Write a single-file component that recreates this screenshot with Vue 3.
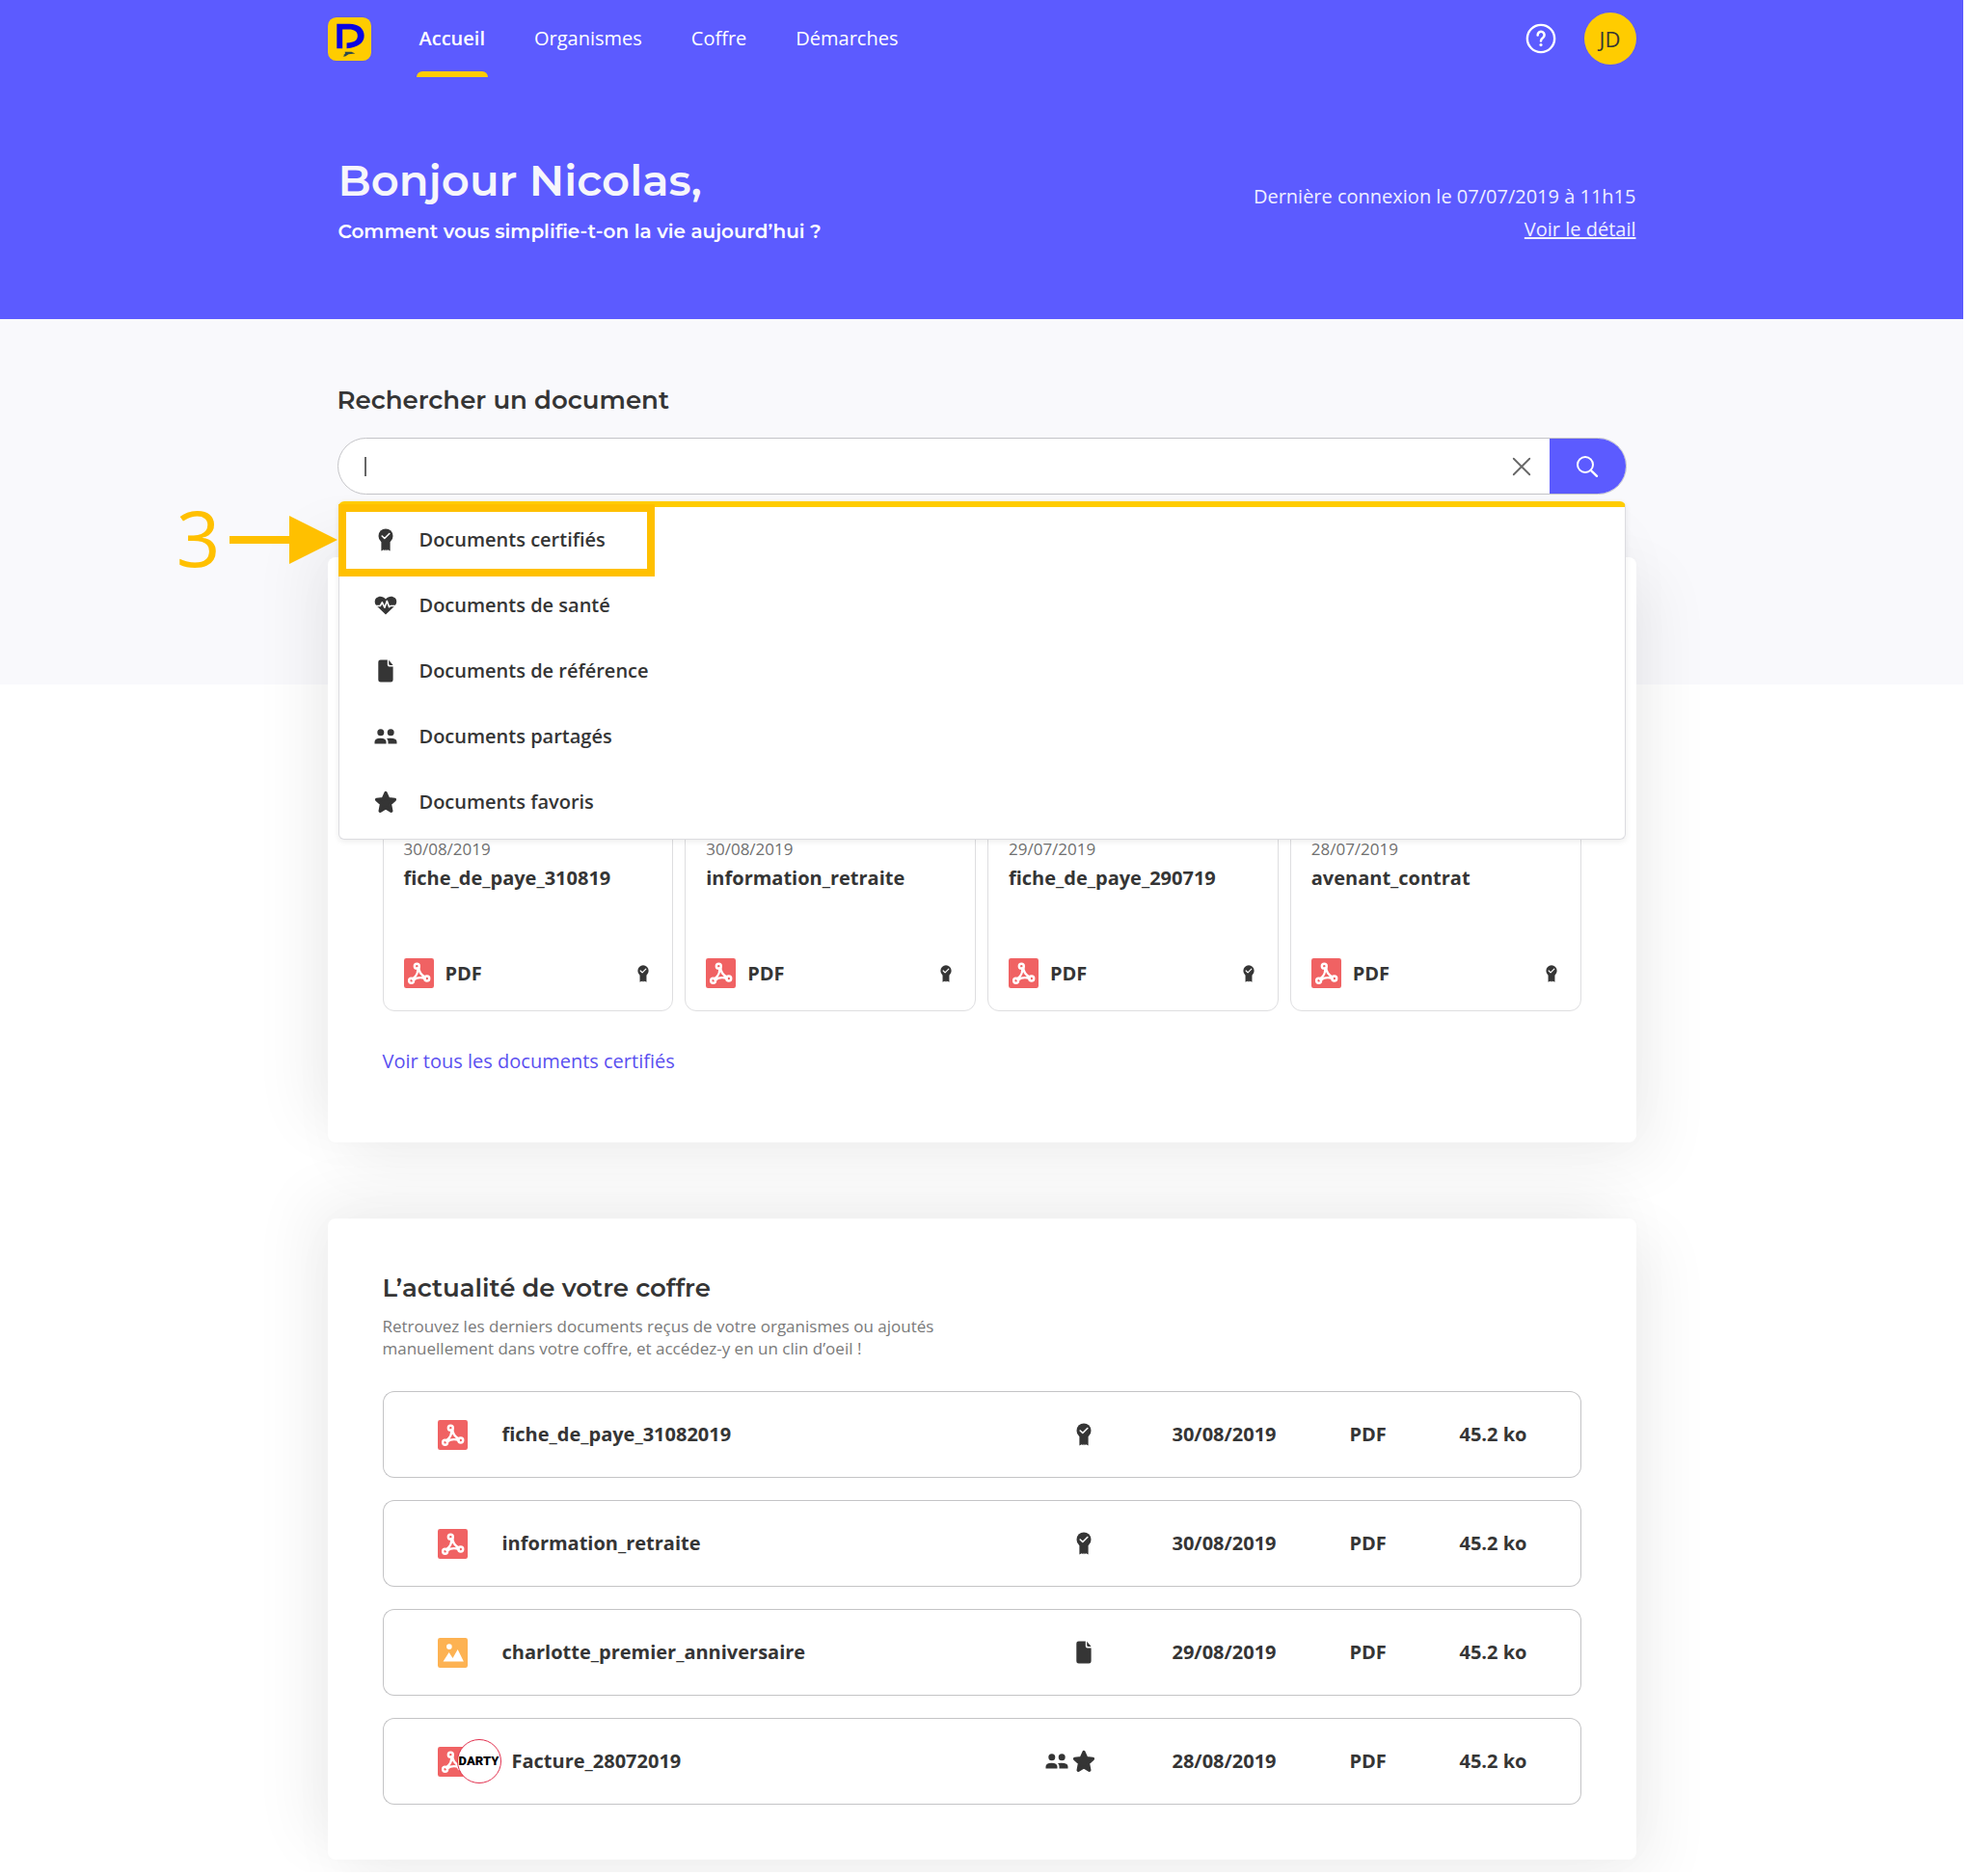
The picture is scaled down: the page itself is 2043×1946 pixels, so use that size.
<script setup>
import { h, ref } from 'vue'

const query = ref('')

const nav = [
  { label: 'Accueil', active: true },
  { label: 'Organismes' },
  { label: 'Coffre' },
  { label: 'Démarches' },
]

const filters = [
  { icon: 'award', label: 'Documents certifiés', highlighted: true },
  { icon: 'health', label: 'Documents de santé' },
  { icon: 'file', label: 'Documents de référence' },
  { icon: 'people', label: 'Documents partagés' },
  { icon: 'star', label: 'Documents favoris' },
]

const certified = [
  { date: '30/08/2019', name: 'fiche_de_paye_310819' },
  { date: '30/08/2019', name: 'information_retraite' },
  { date: '29/07/2019', name: 'fiche_de_paye_290719' },
  { date: '28/07/2019', name: 'avenant_contrat' },
]

const recent = [
  { kind: 'pdf', name: 'fiche_de_paye_31082019', tags: ['award'], date: '30/08/2019' },
  { kind: 'pdf', name: 'information_retraite', tags: ['award'], date: '30/08/2019' },
  { kind: 'image', name: 'charlotte_premier_anniversaire', tags: ['file'], date: '29/08/2019' },
  { kind: 'pdf', brand: 'DARTY', name: 'Facture_28072019', tags: ['people', 'star'], date: '28/08/2019' },
]

const line = (d, stroke, width) =>
  h('path', { d, fill: 'none', stroke, 'stroke-width': width, 'stroke-linecap': 'round', 'stroke-linejoin': 'round' })
const fill = (d, color = 'currentColor') => h('path', { d, fill: color })

const shapes = {
  award: () => [
    h('circle', { cx: 12, cy: 7.9, r: 7.5, fill: 'currentColor' }),
    fill('M7.400 13h9.200v10.500l-2.500-1.200-1.300 1-.8-1.500-.8 1.500-1.300-1-2.500 1.200z'),
    line('M8.200 8l2.600 2.500 5-5', '#fff', 1.6),
  ],
  health: () => [
    fill('M12 21.6L2.6 12.6C.1 10 .2 6.200 2.300 4.300 5.200 1.700 9.300 2.300 12 5.400c2.700-3.100 6.800-3.700 9.700-1.100 2.100 1.900 2.200 5.700-.3 8.300z'),
    line('M.5 12.500h5.800l2-3.700 2.600 5.400 2.400-6.800 2.300 6.200 1.300-1.100h6.600', '#fff', 1.6),
  ],
  file: () => [
    fill('M6.600 .5h7.200v5.200q0 1.800 1.800 1.800h4v13.700q0 2.300-2.300 2.300H6.600q-2.300 0-2.300-2.300V2.800Q4.300.5 6.600.5z'),
    fill('M15.200.7l4.400 5.200h-3.300q-1.100 0-1.100-1.100z'),
  ],
  people: () => [
    fill('M6.800 4.200a3.500 3.500 0 1 1 0 7 3.500 3.500 0 0 1 0-7zM17.200 4.200a3.500 3.500 0 1 1 0 7 3.500 3.500 0 0 1 0-7z'),
    fill('M.5 19.500v-2q0-3.800 6-3.800t6 3.800v2zM14.500 19.500v-2.200q0-2-1.500-3.300 10.500-1.200 10.500 3.500v2z'),
  ],
  star: () => [
    h('path', {
      d: 'M12 2.600l2.700 6.100 6.700.7-5 4.500 1.400 7.300L12 17.700l-5.800 3.500 1.400-7.300-5-4.500 6.700-.7z',
      fill: 'currentColor', stroke: 'currentColor', 'stroke-width': 3.4, 'stroke-linejoin': 'round',
    }),
  ],
  pdf: () => [
    h('rect', { width: 24, height: 24, rx: 1.800, fill: '#f06263' }),
    h('g', { fill: 'none', stroke: '#fff', 'stroke-width': 1.900, 'stroke-linecap': 'round' }, [
      h('circle', { cx: 10.300, cy: 6.300, r: 1.900 }),
      h('circle', { cx: 5.900, cy: 18, r: 1.900 }),
      h('circle', { cx: 18.400, cy: 16.300, r: 1.900 }),
      h('path', { d: 'M11.800 7.800c0 2.700 2 5.900 5.100 7.200M10.900 8.200c.5 2.900-1.200 6.400-4.100 8.400M7.500 17.300c2.700-1.700 6.400-2.100 9.300-1' }),
    ]),
  ],
  image: () => [
    h('rect', { width: 24, height: 24, rx: 1.800, fill: '#fdb252' }),
    fill('M4.300 18.900L9 11.700l3 4.500 4-7 4.800 9.700z', '#fff'),
    h('circle', { cx: 9.200, cy: 7, r: 2.200, fill: '#fff' }),
  ],
  close: () => [line('M3 3l18 18M21 3L3 21', 'currentColor', 2)],
  search: () => [
    h('circle', { cx: 10, cy: 10, r: 8, fill: 'none', stroke: 'currentColor', 'stroke-width': 2 }),
    line('M15.800 15.800l6.200 6', 'currentColor', 2.400),
  ],
  help: () => [
    h('circle', { cx: 12, cy: 12, r: 10.600, fill: 'none', stroke: 'currentColor', 'stroke-width': 1.800 }),
    line('M9.500 9.300a2.600 2.600 0 1 1 4.200 2c-1.100.8-1.700 1.300-1.700 2.500', 'currentColor', 1.900),
    h('circle', { cx: 12, cy: 16.900, r: 1.200, fill: 'currentColor' }),
  ],
}

const Icon = (props) =>
  h('svg', { viewBox: '0 0 24 24', width: props.size, height: props.size, 'aria-hidden': 'true' }, shapes[props.name]())
Icon.props = ['name', 'size']
</script>

<template>
  <div class="page">
    <header class="banner">
      <div class="container topbar">
        <a href="#" class="logo" aria-label="Digiposte">
          <svg viewBox="0 0 46 46" width="45" height="45" aria-hidden="true">
            <rect width="46" height="46" rx="9" fill="#fc0" />
            <path d="M9.500 33V7H23c9.500 0 15.500 5 15.500 12.500S32 32 20 33V27c8-.3 11.500-2.900 11.500-7.400s-3.500-6.800-9-6.800h-7V33z" fill="#0a05e0" />
            <path d="M18 36.500h7l4 1.800-7 .9-3.500 2.300h-2.500l2-2.200h-1.500l2-1z" fill="#2c4a4d" />
          </svg>
        </a>
        <nav class="nav" aria-label="Navigation principale">
          <a v-for="item in nav" :key="item.label" href="#" :class="['nav-link', { active: item.active }]">{{ item.label }}</a>
        </nav>
        <div class="account">
          <button type="button" class="help" aria-label="Aide"><Icon name="help" size="32" /></button>
          <button type="button" class="avatar">JD</button>
        </div>
      </div>
      <div class="container hero">
        <div class="greeting">
          <h1>Bonjour Nicolas,</h1>
          <p>Comment vous simplifie-t-on la vie aujourd’hui ?</p>
        </div>
        <div class="last-login">
          <p>Dernière connexion le 07/07/2019 à 11h15</p>
          <a href="#">Voir le détail</a>
        </div>
      </div>
    </header>

    <section class="search-band">
      <div class="container search-area">
        <label class="heading" for="search">Rechercher un document</label>
        <div class="search">
          <form class="search-bar" @submit.prevent>
            <div class="field">
              <span class="caret"></span>
              <input id="search" v-model="query" type="text" autocomplete="off" />
            </div>
            <button type="button" class="clear" aria-label="Effacer"><Icon name="close" size="22" /></button>
            <button type="submit" class="submit" aria-label="Rechercher"><Icon name="search" size="24" /></button>
          </form>
          <ul class="suggestions">
            <li v-for="filter in filters" :key="filter.label">
              <button type="button" class="suggestion"><Icon :name="filter.icon" size="24" />{{ filter.label }}</button>
              <div v-if="filter.highlighted" class="callout">
                <span class="step">3</span>
                <svg class="arrow" viewBox="0 0 112 50" width="112" height="50" aria-hidden="true">
                  <path d="M0 21h62V0l50 25-50 25V29H0z" fill="#ffc000" />
                </svg>
              </div>
            </li>
          </ul>
        </div>
      </div>
    </section>

    <main class="container content">
      <section class="panel certified">
        <div class="cards">
          <article v-for="doc in certified" :key="doc.name" class="card">
            <time>{{ doc.date }}</time>
            <h3>{{ doc.name }}</h3>
            <div class="card-foot">
              <Icon name="pdf" size="31" />
              <span>PDF</span>
              <Icon class="badge" name="award" size="18" />
            </div>
          </article>
        </div>
        <a href="#" class="all-link">Voir tous les documents certifiés</a>
      </section>

      <section class="panel news">
        <h2 class="heading">L’actualité de votre coffre</h2>
        <p class="intro">Retrouvez les derniers documents reçus de votre organismes ou ajoutés manuellement dans votre coffre, et accédez-y en un clin d’oeil !</p>
        <table aria-label="Derniers documents">
          <colgroup>
            <col />
            <col class="col-tags" />
            <col class="col-date" />
            <col class="col-type" />
            <col class="col-size" />
          </colgroup>
          <tbody>
            <tr v-for="doc in recent" :key="doc.name">
              <td class="file-cell">
                <div class="file">
                  <span class="thumb">
                    <Icon :name="doc.kind" size="31" />
                    <span v-if="doc.brand" class="brand">{{ doc.brand }}</span>
                  </span>
                  <span :class="{ shifted: doc.brand }">{{ doc.name }}</span>
                </div>
              </td>
              <td>
                <div class="tags"><Icon v-for="tag in doc.tags" :key="tag" :name="tag" size="24" /></div>
              </td>
              <td>{{ doc.date }}</td>
              <td>PDF</td>
              <td>45.2 ko</td>
            </tr>
          </tbody>
        </table>
      </section>
    </main>
  </div>
</template>

<style>
body {
  margin: 0;
  background: #fff;
}
</style>

<style scoped>
.page {
  margin-right: 7px;
  padding-bottom: 13px;
  overflow: hidden;
  color: #353535;
  font: 20px/28px "Open Sans", sans-serif;
}
.page * {
  box-sizing: border-box;
}
h1, h2, h3, p, ul {
  margin: 0;
  padding: 0;
}
ul {
  list-style: none;
}
svg {
  display: block;
  flex: none;
}
button {
  border: 0;
  padding: 0;
  background: none;
  color: inherit;
  font: inherit;
  cursor: pointer;
}
a {
  color: inherit;
}
.container {
  width: calc(100% - 48px);
  max-width: 1357px;
  margin: 0 auto;
}
.heading {
  display: block;
  font: 600 26px/32px "Montserrat", "Inter", sans-serif;
}

.banner {
  padding-bottom: 75px;
  background: #5c5bff;
  color: #fff;
}
.topbar {
  display: flex;
  align-items: center;
  height: 80px;
}
.nav {
  display: flex;
  align-self: stretch;
  gap: 45px;
  margin-left: 47px;
}
.nav-link {
  display: flex;
  align-items: center;
  padding: 0 3px;
  text-decoration: none;
}
.nav-link.active {
  position: relative;
  font-weight: 600;
}
.nav-link.active::after {
  content: "";
  position: absolute;
  left: 0;
  right: 0;
  bottom: 0;
  height: 6px;
  border-radius: 6px 6px 0 0;
  background: #fc0;
}
.account {
  display: flex;
  align-items: center;
  gap: 29px;
  margin-left: auto;
}
.avatar {
  width: 54px;
  height: 54px;
  border-radius: 50%;
  background: #fc0;
  color: #353535;
  font-size: 22px;
}
.hero {
  display: flex;
  justify-content: space-between;
  align-items: flex-end;
  padding: 78px 0 0 11px;
}
.greeting h1 {
  color: #f6f6fb;
  font: 600 45px/58px "Montserrat", "Inter", sans-serif;
}
.greeting p {
  margin-top: 8px;
  font: 600 20px/32px "Montserrat", "Inter", sans-serif;
}
.last-login {
  padding-bottom: 1px;
  color: #efefff;
  text-align: right;
  line-height: 34px;
}

.search-band {
  height: 379px;
  padding-top: 68px;
  background: #f9f9fc;
}
.search-area {
  padding: 0 10px;
}
.search {
  position: relative;
  z-index: 2;
  margin-top: 23px;
}
.search-bar {
  display: flex;
  height: 59px;
  border: 1px solid #c4c4c8;
  border-radius: 30px;
  background: #fff;
  overflow: hidden;
}
.field {
  display: flex;
  flex: 1;
  align-items: center;
  padding-left: 27px;
}
.caret {
  width: 2px;
  height: 20px;
  background: #666;
}
.field input {
  flex: 1;
  min-width: 0;
  height: 100%;
  border: 0;
  outline: 0;
  background: none;
  color: inherit;
  font: inherit;
}
.clear {
  display: grid;
  place-items: center;
  width: 58px;
  color: #666;
}
.submit {
  display: grid;
  place-items: center;
  width: 79px;
  background: #5c5bff;
  color: #fff;
}
.suggestions {
  position: absolute;
  top: 66px;
  left: 1px;
  right: 1px;
  padding-bottom: 4px;
  border: 1px solid #dcdce0;
  border-top: 6px solid #fc0;
  border-radius: 6px;
  background: #fff;
  box-shadow: 0 2px 6px rgba(0, 0, 0, 0.08);
}
.suggestions li {
  position: relative;
}
.suggestion {
  display: flex;
  align-items: center;
  gap: 23px;
  width: 100%;
  height: 68px;
  padding-left: 36px;
  font-weight: 600;
}
.callout {
  position: absolute;
  top: -3px;
  left: -1px;
  width: 328px;
  height: 75px;
  border: 8px solid #ffc000;
}
.step,
.arrow {
  position: absolute;
  top: 4px;
  right: 100%;
  margin-right: 9px;
}
.step {
  top: 1px;
  margin-right: 130px;
  color: #ffc000;
  font-size: 80px;
  line-height: 50px;
}

.content {
  position: relative;
  z-index: 1;
  margin-top: -132px;
}
.panel {
  padding: 0 57px;
  border-radius: 8px;
  background: #fff;
  box-shadow: -20px -20px 64px rgba(0, 0, 0, 0.06), 20px 20px 64px rgba(0, 0, 0, 0.06);
}
.certified {
  padding-top: 120px;
  padding-bottom: 70px;
}
.cards {
  display: grid;
  grid-template-columns: repeat(4, 1fr);
  gap: 12px;
}
.card {
  display: flex;
  flex-direction: column;
  height: 351px;
  padding: 170px 21px 23px;
  border: 1px solid #dedee0;
  border-radius: 12px;
}
.card time {
  color: #707070;
  font-size: 17px;
  line-height: 24px;
}
.card h3 {
  margin-top: 4px;
  font-size: 20px;
  font-weight: 700;
}
.card-foot {
  display: flex;
  align-items: center;
  gap: 12px;
  margin-top: auto;
  font-weight: 700;
}
.badge {
  margin-left: auto;
}
.all-link {
  display: inline-block;
  margin-top: 38px;
  color: #5a4ff0;
  text-decoration: none;
}

.news {
  margin-top: 79px;
  padding-top: 56px;
  padding-bottom: 34px;
}
.intro {
  max-width: 600px;
  margin-top: 12px;
  color: #7a7a7a;
  font-size: 17px;
  line-height: 23px;
}
table {
  width: 100%;
  margin-top: 10px;
  border-spacing: 0 23px;
  table-layout: fixed;
  font-weight: 700;
}
.col-tags { width: 160px; }
.col-date { width: 184px; }
.col-type { width: 114px; }
.col-size { width: 126px; }
td {
  height: 90px;
  padding: 0;
  border: solid #c4c4c6;
  border-width: 1px 0;
}
td:first-child {
  padding-left: 56px;
  border-left-width: 1px;
  border-radius: 12px 0 0 12px;
}
td:last-child {
  border-right-width: 1px;
  border-radius: 0 12px 12px 0;
}
.file {
  display: flex;
  align-items: center;
  gap: 36px;
}
.thumb {
  position: relative;
}
.brand {
  position: absolute;
  top: -8px;
  left: 20px;
  width: 46px;
  height: 46px;
  border: 1px solid #e2304e;
  border-radius: 50%;
  background: #fff;
  color: #000;
  font: 900 13px/44px "Liberation Sans Narrow", "Roboto", sans-serif;
  text-align: center;
}
.shifted {
  padding-left: 10px;
}
.tags {
  display: flex;
  justify-content: flex-end;
  gap: 4px;
  padding-right: 80px;
}
</style>
